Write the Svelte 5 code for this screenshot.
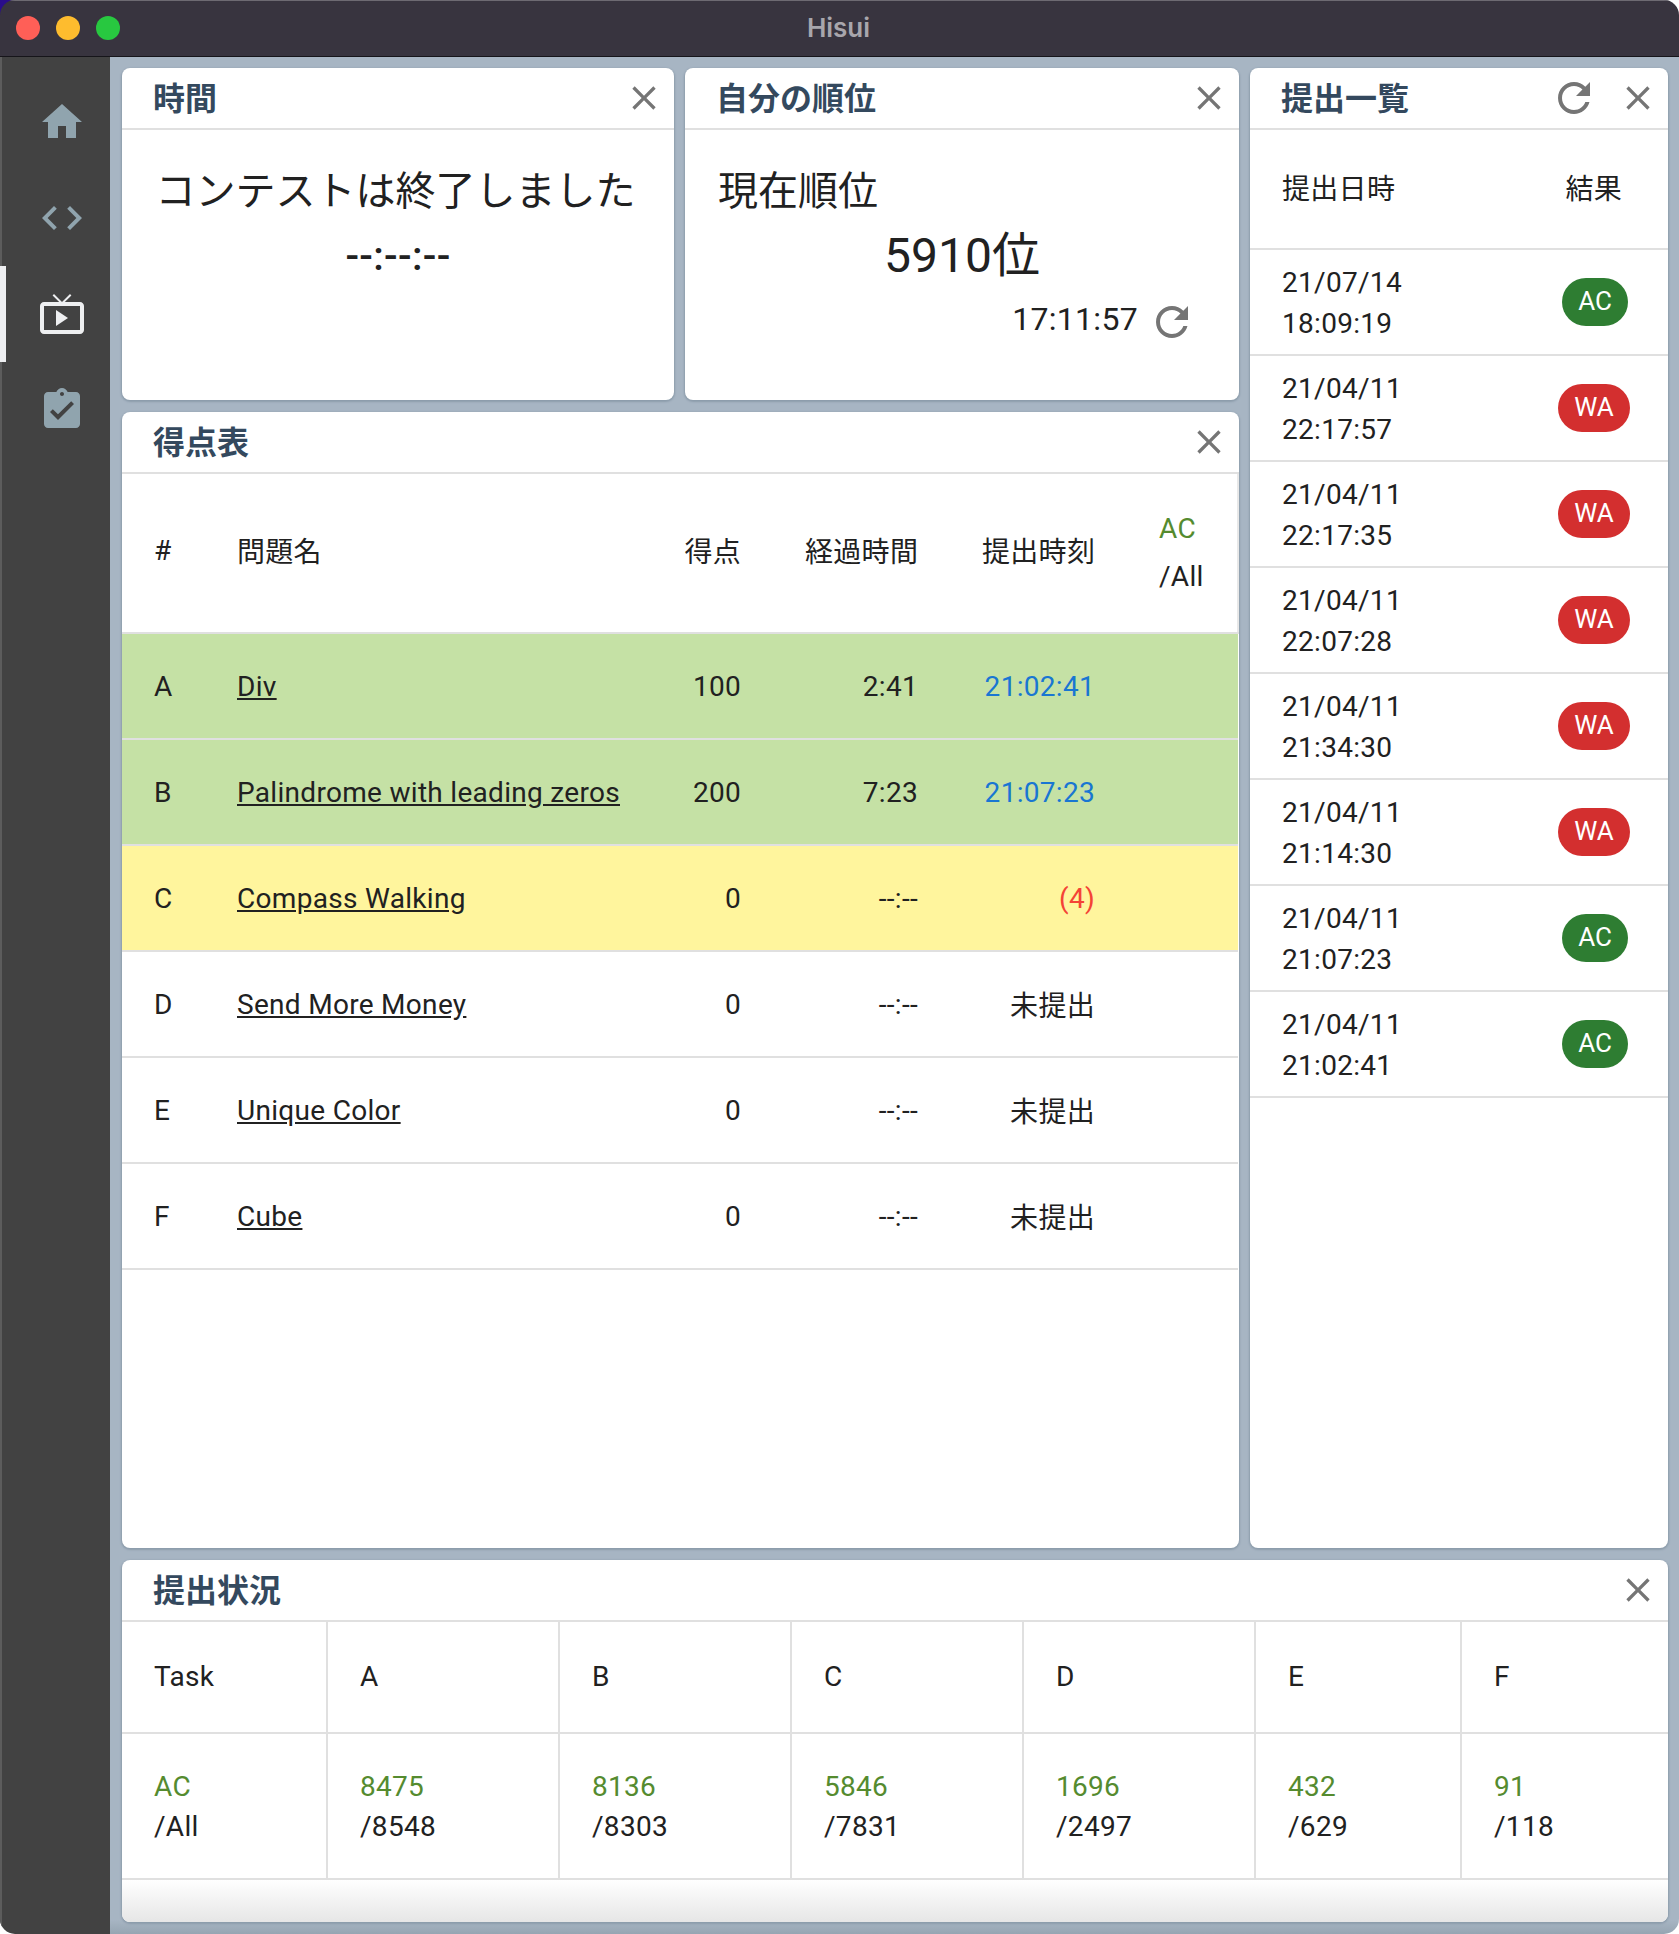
<script>
	const close = 'M19 6.41L17.59 5 12 10.59 6.41 5 5 6.41 10.59 12 5 17.59 6.41 19 12 13.41 17.59 19 19 17.59 13.41 12z';
	const refresh =
		'M17.65 6.35C16.2 4.9 14.21 4 12 4c-4.42 0-7.99 3.58-7.99 8s3.57 8 7.99 8c3.73 0 6.84-2.55 7.73-6h-2.08c-.82 2.33-3.04 4-5.65 4-3.31 0-6-2.69-6-6s2.69-6 6-6c1.66 0 3.14.69 4.22 1.78L13 11h7V4l-2.35 2.35z';

	const navItems = [
		{ d: 'M10 20v-6h4v6h5v-8h3L12 3 2 12h3v8z' },
		{ d: 'M9.4 16.6L4.8 12l4.6-4.6L8 6l-6 6 6 6 1.4-1.4zm5.2 0l4.6-4.6-4.6-4.6L16 6l6 6-6 6-1.4-1.4z' },
		{
			d: 'M21 6h-7.59l3.29-3.29L16 2l-4 4-4-4-.71.71L10.59 6H3c-1.1 0-2 .89-2 2v12c0 1.1.9 2 2 2h18c1.1 0 2-.9 2-2V8c0-1.11-.9-2-2-2zm0 14H3V8h18v12zM9 10v8l6-4z',
			active: true
		},
		{
			d: 'M19 3h-4.18C14.4 1.84 13.3 1 12 1c-1.3 0-2.4.84-2.82 2H5c-1.1 0-2 .9-2 2v14c0 1.1.9 2 2 2h14c1.1 0 2-.9 2-2V5c0-1.1-.9-2-2-2zm-7 0c.55 0 1 .45 1 1s-.45 1-1 1-1-.45-1-1 .45-1 1-1zm-2 14l-4-4 1.41-1.41L10 14.17l6.59-6.59L18 9l-8 8z'
		}
	];

	const problems = [
		{ id: 'A', name: 'Div', score: 100, elapsed: '2:41', time: '21:02:41', kind: 'ac' },
		{ id: 'B', name: 'Palindrome with leading zeros', score: 200, elapsed: '7:23', time: '21:07:23', kind: 'ac' },
		{ id: 'C', name: 'Compass Walking', score: 0, elapsed: '--:--', time: '(4)', kind: 'wa' },
		{ id: 'D', name: 'Send More Money', score: 0, elapsed: '--:--', time: '未提出', kind: '' },
		{ id: 'E', name: 'Unique Color', score: 0, elapsed: '--:--', time: '未提出', kind: '' },
		{ id: 'F', name: 'Cube', score: 0, elapsed: '--:--', time: '未提出', kind: '' }
	];

	const submissions = [
		['21/07/14', '18:09:19', 'AC'],
		['21/04/11', '22:17:57', 'WA'],
		['21/04/11', '22:17:35', 'WA'],
		['21/04/11', '22:07:28', 'WA'],
		['21/04/11', '21:34:30', 'WA'],
		['21/04/11', '21:14:30', 'WA'],
		['21/04/11', '21:07:23', 'AC'],
		['21/04/11', '21:02:41', 'AC']
	];

	const stats = [
		{ task: 'Task', ac: 'AC', all: '/All', width: 205 },
		{ task: 'A', ac: '8475', all: '/8548', width: 232 },
		{ task: 'B', ac: '8136', all: '/8303', width: 232 },
		{ task: 'C', ac: '5846', all: '/7831', width: 232 },
		{ task: 'D', ac: '1696', all: '/2497', width: 232 },
		{ task: 'E', ac: '432', all: '/629', width: 206 },
		{ task: 'F', ac: '91', all: '/118', width: 207 }
	];
</script>

{#snippet icon(d, cls)}
	<svg class={cls} viewBox="0 0 24 24" aria-hidden="true"><path {d} /></svg>
{/snippet}

{#snippet header(title, withRefresh)}
	<header class="panel-head">
		<h2>{title}</h2>
		{#if withRefresh}
			<button class="icon-btn" aria-label="更新">{@render icon(refresh, 'refresh')}</button>
		{/if}
		<button class="icon-btn close-btn" aria-label="閉じる">{@render icon(close, 'close')}</button>
	</header>
{/snippet}

<div class="corner"></div>
<div class="window">
	<div class="titlebar">
		<div class="lights">
			<span class="red"></span>
			<span class="yellow"></span>
			<span class="green"></span>
		</div>
		<span class="app-title">Hisui</span>
	</div>

	<div class="main">
		<nav class="sidebar">
			{#each navItems as item}
				<div class="nav-item" class:active={item.active}>
					{@render icon(item.d, 'nav-icon')}
				</div>
			{/each}
		</nav>

		<div class="board">
			<section class="panel">
				{@render header('時間')}
				<div class="timer">
					<div class="timer-label">コンテストは終了しました</div>
					<div class="timer-value">--:--:--</div>
				</div>
			</section>

			<section class="panel">
				{@render header('自分の順位')}
				<div class="rank">
					<div class="rank-label">現在順位</div>
					<div class="rank-value">5910位</div>
					<div class="rank-time">
						<span>17:11:57</span>
						{@render icon(refresh, 'refresh')}
					</div>
				</div>
			</section>

			<section class="panel submissions">
				{@render header('提出一覧', true)}
				<div class="sub-head">
					<span>提出日時</span>
					<span>結果</span>
				</div>
				{#each submissions as [date, time, result]}
					<div class="sub-row">
						<div class="sub-date">{date}<br />{time}</div>
						<span class="chip {result.toLowerCase()}">{result}</span>
					</div>
				{/each}
			</section>

			<section class="panel scores">
				{@render header('得点表')}
				<table class="score-table">
					<thead>
						<tr>
							<th class="c-id">#</th>
							<th class="c-name">問題名</th>
							<th class="c-score num">得点</th>
							<th class="c-elapsed num">経過時間</th>
							<th class="c-time num">提出時刻</th>
							<th class="c-ratio"><span class="ac-text">AC</span><br />/All</th>
						</tr>
					</thead>
					<tbody>
						{#each problems as p}
							<tr class={p.kind}>
								<td>{p.id}</td>
								<td><a href="#{p.id}">{p.name}</a></td>
								<td class="num">{p.score}</td>
								<td class="num">{p.elapsed}</td>
								<td class="num submit-{p.kind || 'none'}">{p.time}</td>
								<td></td>
							</tr>
						{/each}
					</tbody>
				</table>
			</section>

			<section class="panel status">
				{@render header('提出状況')}
				<table class="status-table">
					<thead>
						<tr>
							{#each stats as s}
								<th style="width: {s.width}px">{s.task}</th>
							{/each}
						</tr>
					</thead>
					<tbody>
						<tr>
							{#each stats as s}
								<td><span class="ac-text">{s.ac}</span><br />{s.all}</td>
							{/each}
						</tr>
					</tbody>
				</table>
				<div class="status-foot"></div>
			</section>
		</div>
	</div>
</div>

<style>
	:global(body) {
		background: #fff;
	}

	.corner {
		position: absolute;
		top: 0;
		left: 0;
		width: 16px;
		height: 16px;
		background: #2a0d8c;
	}

	.window {
		position: relative;
		width: 1679px;
		height: 1934px;
		display: flex;
		flex-direction: column;
		overflow: hidden;
		border-radius: 15px;
		font-family: Roboto, 'Noto Sans CJK JP', sans-serif;
		font-size: 28px;
		letter-spacing: 0.3px;
		color: #212121;
	}

	.titlebar {
		flex: none;
		position: relative;
		height: 57px;
		box-sizing: border-box;
		border-top: 1px solid #6d6a72;
		border-bottom: 1px solid #16151a;
		background: #38343f;
		display: flex;
		align-items: center;
		justify-content: center;
	}

	.lights {
		position: absolute;
		left: 16px;
		top: 15px;
		display: flex;
		gap: 16px;
	}

	.lights span {
		width: 24px;
		height: 24px;
		border-radius: 50%;
	}

	.red {
		background: #ff5f57;
	}

	.yellow {
		background: #febc2e;
	}

	.green {
		background: #28c840;
	}

	.app-title {
		font-family: Inter, sans-serif;
		font-size: 26px;
		font-weight: 600;
		letter-spacing: 0;
		color: #a8a6ac;
		margin-top: -2px;
		margin-left: -2px;
	}

	.main {
		flex: 1;
		min-height: 0;
		display: flex;
	}

	.sidebar {
		flex: none;
		width: 110px;
		box-sizing: border-box;
		padding-top: 17px;
		background: #424242;
		box-shadow: inset 2px 0 #5c5c5c;
	}

	.nav-item {
		position: relative;
		height: 96px;
		box-sizing: border-box;
		padding-left: 14px;
		display: flex;
		align-items: center;
		justify-content: center;
		fill: #90a4ae;
	}

	.nav-item.active {
		fill: #eeeff1;
	}

	.nav-item.active::before {
		content: '';
		position: absolute;
		left: 0;
		top: 0;
		bottom: 0;
		width: 6px;
		background: #eeeff1;
	}

	.nav-icon {
		width: 48px;
		height: 48px;
	}

	.board {
		flex: 1;
		min-width: 0;
		box-sizing: border-box;
		padding: 11px 11px 12px 12px;
		background: linear-gradient(#a7b5c3 calc(100% - 14px), #96a5b2);
		display: grid;
		grid-template-columns: 552px 554px 418px;
		grid-template-rows: 332px 1137px 363px;
		gap: 11px;
	}

	.submissions {
		grid-column: 3;
		grid-row: 1 / span 2;
	}

	.scores {
		grid-column: 1 / span 2;
		grid-row: 2;
		margin-top: 1px;
	}

	.status {
		grid-column: 1 / span 3;
		grid-row: 3;
		margin-top: 1px;
	}

	.panel {
		display: flex;
		flex-direction: column;
		min-height: 0;
		background: #fff;
		border-radius: 8px;
		overflow: hidden;
		box-shadow: 0 1px 2px 1px #8c9cab;
	}

	.panel-head {
		flex: none;
		height: 62px;
		box-sizing: border-box;
		padding: 0 10px 0 31px;
		border-bottom: 2px solid #e0e0e0;
		display: flex;
		align-items: center;
	}

	.panel-head h2 {
		flex: 1;
		margin: 0;
		padding-top: 2px;
		font-size: 32px;
		line-height: 58px;
		font-weight: 700;
		letter-spacing: 0;
		color: #34495e;
	}

	.icon-btn {
		padding: 0;
		border: 0;
		background: none;
		display: flex;
		align-items: center;
		fill: #757575;
	}

	.close {
		width: 40px;
		height: 40px;
	}

	.refresh {
		width: 48px;
		height: 48px;
		fill: #757575;
	}

	.icon-btn:has(.refresh) {
		margin-right: 20px;
	}

	.timer {
		padding-top: 29px;
		text-align: center;
		font-size: 40px;
		line-height: 65px;
		letter-spacing: 0;
	}

	.timer-label {
		margin-left: -5px;
	}

	.timer-value {
		letter-spacing: 0.3px;
		font-weight: 500;
	}

	.rank {
		padding: 29px 32px 0 33px;
		letter-spacing: 0;
	}

	.rank-label {
		font-size: 40px;
		line-height: 66px;
	}

	.rank-value {
		font-size: 48px;
		line-height: 62px;
		text-align: center;
		margin-left: -1px;
	}

	.rank-time {
		margin-top: 11px;
		padding-right: 11px;
		display: flex;
		justify-content: flex-end;
		align-items: center;
		gap: 10px;
		font-size: 32px;
		letter-spacing: 0.3px;
	}

	.rank-time span {
		line-height: 48px;
		margin-top: -6px;
	}

	.sub-head,
	.sub-row {
		flex: none;
		box-sizing: border-box;
		border-bottom: 2px solid #e0e0e0;
		padding: 0 32px;
		display: flex;
		align-items: center;
		justify-content: space-between;
		line-height: 41px;
	}

	.sub-head {
		height: 120px;
	}

	.sub-head span:last-child {
		margin-right: 14px;
	}

	.sub-row {
		height: 106px;
		padding-right: 38px;
	}

	.sub-date {
		margin-top: 2px;
	}

	.chip {
		width: 66px;
		height: 48px;
		margin-right: 2px;
		border-radius: 24px;
		color: #fff;
		font-size: 26px;
		line-height: 46px;
		letter-spacing: 0;
		text-align: center;
	}

	.chip.wa {
		width: 72px;
		margin-right: 0;
		background: #d32f2f;
	}

	.chip.ac {
		background: #2e7d32;
	}

	table {
		flex: none;
		border-collapse: collapse;
		table-layout: fixed;
		width: 100%;
	}

	th {
		font-weight: 400;
		text-align: left;
	}

	th,
	td {
		box-sizing: border-box;
		padding: 0 32px;
		border-bottom: 2px solid #e0e0e0;
	}

	.score-table thead tr {
		height: 159px;
	}

	.score-table tbody tr {
		height: 106px;
	}

	.score-table th {
		padding-bottom: 6px;
	}

	.c-id {
		width: 83px;
	}

	.c-score {
		width: 121px;
		white-space: nowrap;
	}

	.c-name {
		width: 447px;
	}

	.c-elapsed,
	.c-time {
		width: 177px;
		white-space: nowrap;
	}

	.score-table .c-ratio {
		width: 111px;
		line-height: 48px;
		padding-right: 0;
		padding-bottom: 0;
		border-right: 2px solid #e8e8e8;
	}

	.score-table .num {
		text-align: right;
	}

	.score-table a {
		color: inherit;
		white-space: nowrap;
	}

	tr.ac {
		background: #c5e1a5;
	}

	tr.wa {
		background: #fff59d;
	}

	.submit-ac {
		color: #1976d2;
	}

	.submit-wa {
		color: #f44336;
	}

	.ac-text {
		color: #558b2f;
	}

	.status-table th,
	.status-table td {
		border-right: 2px solid #e0e0e0;
	}

	.status-table th:last-child,
	.status-table td:last-child {
		border-right: 0;
	}

	.status-table thead tr {
		height: 111px;
	}

	.status-table th {
		padding-bottom: 2px;
	}

	.status-table tbody tr {
		height: 146px;
	}

	.status-table td {
		padding-top: 1px;
		line-height: 40px;
	}

	.status-foot {
		flex: 1;
		background: linear-gradient(#fff, #e6e6e6);
	}
</style>
